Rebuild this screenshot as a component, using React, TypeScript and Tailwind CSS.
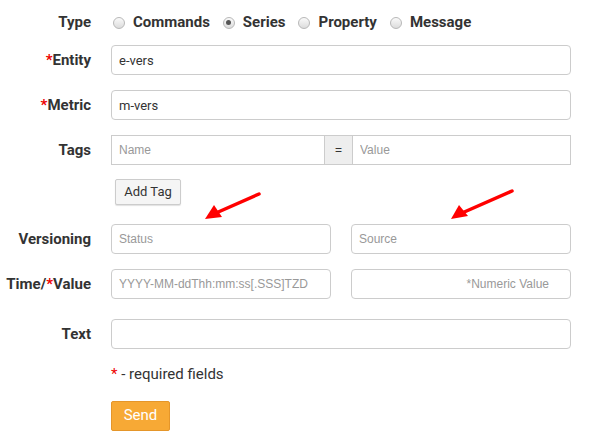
// Series send form

const labelFont = { fontFamily: 'Roboto, "Noto Sans", sans-serif' }

function Radio({ checked }: { checked?: boolean }) {
  return (
    <span className="inline-flex h-[12px] w-[12px] items-center justify-center rounded-full border border-[#b8b8b8] bg-gradient-to-b from-[#fafafa] to-[#dcdcdc]">
      {checked && <span className="h-[5px] w-[5px] rounded-full bg-[#555]" />}
    </span>
  )
}

function Label({ children }: { children: React.ReactNode }) {
  return (
    <div className="w-[91px] shrink-0 text-right text-[15px] font-bold text-[#333]" style={labelFont}>
      {children}
    </div>
  )
}

const Req = () => <span className="text-[#e00]">*</span>

const inputCls =
  'h-[30px] rounded-[4px] border border-[#ccc] bg-white px-[7px] text-[12px] text-[#333] placeholder:text-[#999] outline-none'

export default function App() {
  return (
    <div className="relative h-[440px] w-[593px] bg-white" style={{ fontFamily: '"Liberation Sans", Arial, sans-serif' }}>
      <div className="flex flex-col pt-[11px]">
        {/* Type */}
        <div className="flex h-[23px] items-center gap-[22px]">
          <Label>Type</Label>
          <div className="flex items-center text-[15px] font-bold text-[#333]" style={labelFont}>
            <Radio />
            <span className="ml-[8px] mr-[13px]">Commands</span>
            <Radio checked />
            <span className="ml-[8px] mr-[13px]">Series</span>
            <Radio />
            <span className="ml-[8px] mr-[13px]">Property</span>
            <Radio />
            <span className="ml-[8px]">Message</span>
          </div>
        </div>

        {/* Entity */}
        <div className="mt-[11px] flex items-center gap-[20px]">
          <Label>
            <Req />Entity
          </Label>
          <input className={`${inputCls} w-[460px] text-[13px]`} style={labelFont} defaultValue="e-vers" />
        </div>

        {/* Metric */}
        <div className="mt-[15px] flex items-center gap-[20px]">
          <Label>
            <Req />Metric
          </Label>
          <input className={`${inputCls} w-[460px] text-[13px]`} style={labelFont} defaultValue="m-vers" />
        </div>

        {/* Tags */}
        <div className="mt-[15px] flex items-center gap-[20px]">
          <Label>Tags</Label>
          <div className="flex h-[30px] w-[460px]">
            <input className="h-full w-[214px] border border-[#ccc] px-[7px] text-[12px] outline-none placeholder:text-[#999]" placeholder="Name" />
            <span className="flex h-full w-[27px] items-center justify-center border-y border-[#ccc] bg-[#eee] text-[12px] text-[#333]">=</span>
            <input className="h-full flex-1 border border-[#ccc] px-[7px] text-[12px] outline-none placeholder:text-[#999]" placeholder="Value" />
          </div>
        </div>

        {/* Add Tag */}
        <div className="mt-[14px] pl-[115px]">
          <button className="h-[26px] w-[66px] rounded-[2px] border border-[#ccc] bg-[#f5f5f5] text-[13px] text-[#333] shadow-[0_1px_1px_rgba(0,0,0,0.12)]" style={labelFont}>
            Add Tag
          </button>
        </div>

        {/* Versioning */}
        <div className="mt-[19px] flex items-center gap-[20px]">
          <Label>Versioning</Label>
          <div className="flex w-[460px] gap-[20px]">
            <input className={`${inputCls} w-[220px]`} placeholder="Status" />
            <input className={`${inputCls} w-[220px]`} placeholder="Source" />
          </div>
        </div>

        {/* Time / Value */}
        <div className="mt-[15px] flex items-center gap-[20px]">
          <Label>
            Time/<Req />Value
          </Label>
          <div className="flex w-[460px] gap-[20px]">
            <input className={`${inputCls} w-[220px]`} placeholder="YYYY-MM-ddThh:mm:ss[.SSS]TZD" />
            <input className={`${inputCls} w-[220px] pr-[21px] text-right`} placeholder="*Numeric Value" />
          </div>
        </div>

        {/* Text */}
        <div className="mt-[20px] flex items-center gap-[20px]">
          <Label>Text</Label>
          <input className={`${inputCls} w-[460px]`} />
        </div>

        <div className="mt-[14px] pl-[111px] text-[15px] text-[#333]" style={labelFont}>
          <Req /> - required fields
        </div>

        <div className="mt-[15px] pl-[111px]">
          <button className="h-[30px] w-[59px] rounded-[2px] border border-[#e5962a] bg-[#f7a935] text-[15px] text-white" style={labelFont}>
            Send
          </button>
        </div>
      </div>

      {/* annotation arrows */}
      <svg className="pointer-events-none absolute left-0 top-0" width="593" height="440">
        <g stroke="#f00" strokeWidth="3.5" strokeLinecap="round" fill="#f00">
          <line x1="259" y1="194" x2="216" y2="213" />
          <line x1="512" y1="191" x2="462" y2="213" />
        </g>
        <polygon points="205,219 214,205 222,217" fill="#f00" />
        <polygon points="451,219 459,205 468,216" fill="#f00" />
      </svg>
    </div>
  )
}
